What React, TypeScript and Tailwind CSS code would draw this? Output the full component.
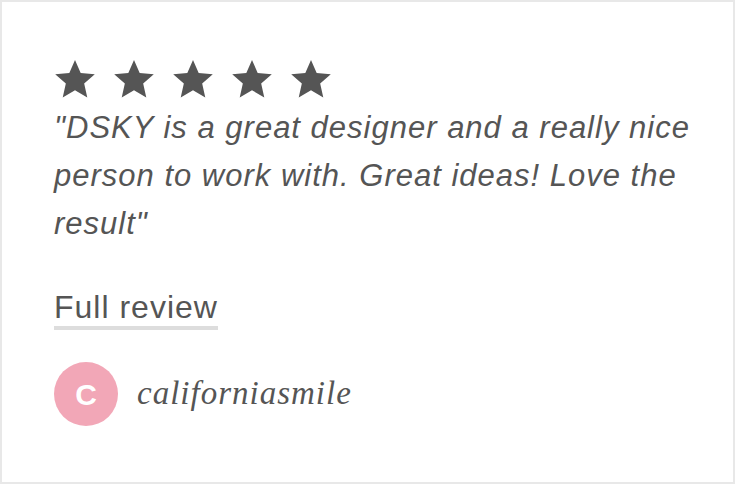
import React from "react";

function Star() {
  return (
    <svg viewBox="0 0 24 24" className="w-[44px] h-[44px] fill-[#555555]">
      <path d="M12 1.6l3.1 7.1 7.7.7-5.8 5.1 1.7 7.6L12 18.1l-6.7 4 1.7-7.6-5.8-5.1 7.7-.7z" />
    </svg>
  );
}

export default function App() {
  return (
    <div className="w-[735px] h-[484px] bg-white border-2 border-[#e8e8e8] text-[#555555]">
      <div className="pl-[52px] pr-[40px] pt-[55px]">
        {/* Stars */}
        <div className="flex gap-[15px] -ml-[1px]">
          <Star />
          <Star />
          <Star />
          <Star />
          <Star />
        </div>

        {/* Quote */}
        <p className="mt-[3px] italic text-[31px] tracking-[1px] leading-[48px] font-['Liberation_Sans',Arial,sans-serif] max-w-[650px]">
          "DSKY is a great designer and a really nice person to work with. Great ideas! Love the result"
        </p>

        {/* Full review link */}
        <div className="mt-[41px]">
          <a className="inline-block text-[32px] tracking-[1px] leading-[36px] font-['Liberation_Sans',Arial,sans-serif] border-b-4 border-[#dddddd] pb-[1px]">
            Full review
          </a>
        </div>

        {/* Reviewer */}
        <div className="mt-[32px] flex items-center gap-[19px]">
          <div className="w-[64px] h-[64px] rounded-full bg-[#f2a7b7] flex items-center justify-center text-white font-bold text-[30px] font-['Liberation_Sans',Arial,sans-serif]">
            C
          </div>
          <span className="italic text-[33px] tracking-[1px] font-['Liberation_Serif','Times_New_Roman',serif]">
            californiasmile
          </span>
        </div>
      </div>
    </div>
  );
}
